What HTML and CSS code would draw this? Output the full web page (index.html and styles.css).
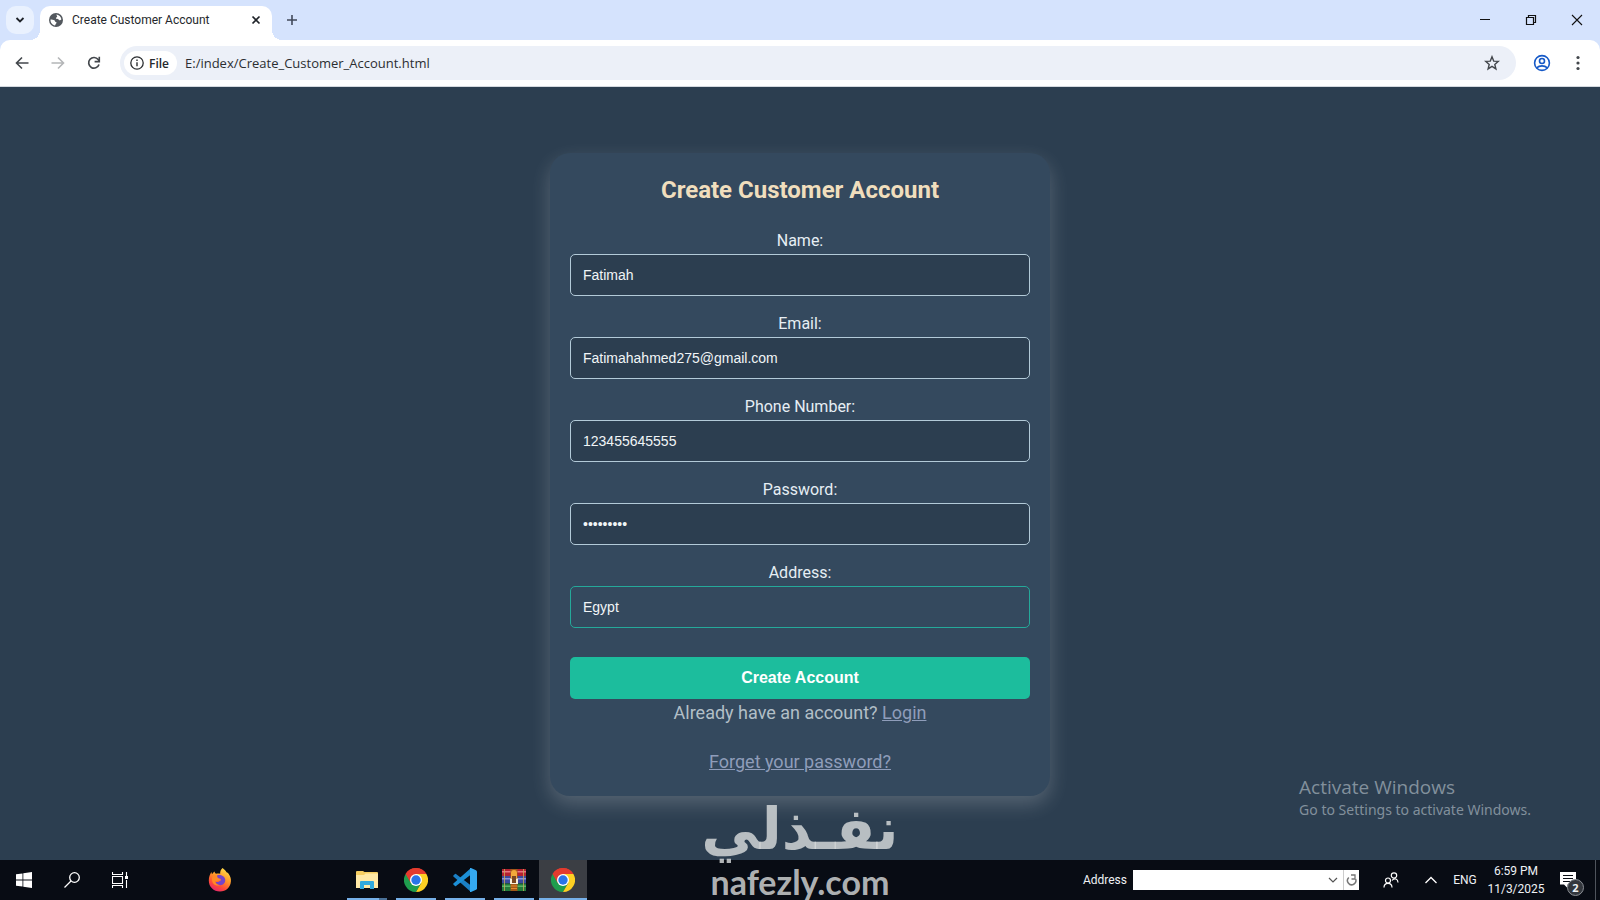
FILE: index.html
```html
<!DOCTYPE html>
<html lang="en">
<head>
<meta charset="utf-8">
<meta name="viewport" content="width=device-width, initial-scale=1">
<title>Create Customer Account</title>
<link rel="stylesheet" href="styles.css">
</head>
<body>
<svg class="defs" width="0" height="0" aria-hidden="true">
  <symbol id="chrome-logo" viewBox="0 0 24 24">
    <path d="M12 12 1.6 6A12 12 0 0 1 22.4 6z" fill="#e33b2e"/>
    <path d="M12 12 1.6 6A12 12 0 0 0 12 24l5.2-9z" fill="#1f9d4d"/>
    <path d="M12 12V6h10.4A12 12 0 0 1 12 24l5.2-9z" fill="#fdd023"/>
    <path d="M12 6H22.4A12 12 0 0 0 1.6 6l5.2 9z" fill="#e33b2e"/>
    <circle cx="12" cy="12" r="6" fill="#fff"/>
    <circle cx="12" cy="12" r="4.7" fill="#2a74e8"/>
  </symbol>
</svg>

<header class="browser">
  <div class="tabstrip">
    <button class="tab-search" aria-label="Search tabs"><svg width="10" height="10" viewBox="0 0 10 10"><path d="M1.5 3 5 6.500 8.500 3" fill="none" stroke="#1f2329" stroke-width="1.800"/></svg></button>
    <div class="tab">
      <svg width="14" height="14" viewBox="0 0 14 14"><circle cx="7" cy="7" r="7" fill="#53585e"/><path d="M7.300 1.500c2.500.1 4.800 2.200 5.100 4.800-.7 1-1.500 1.200-2.500.6-.5-1-1.600-.8-2.500-1.100-.8-.3-.4-1.300.3-1.500 1-.3.2-1.300-.4-2.800zM1.500 6.400c1.400.1 3 .2 4 .9.7 1 .3 1.400 1.300 1.700 1.100.3.9 1.200.1 1.700-.6.4-.3 1.300-.9 1.800C3.500 12 1.300 9.500 1.500 6.400z" fill="#fff"/></svg>
      <span class="tab-title">Create Customer Account</span>
      <button class="icon-button tab-close" aria-label="Close tab"><svg width="10" height="10" viewBox="0 0 10 10"><path d="M1.500 1.500l7 7M8.500 1.500l-7 7" stroke="#1f2329" stroke-width="1.700"/></svg></button>
    </div>
    <button class="icon-button new-tab" aria-label="New tab"><svg width="12" height="12" viewBox="0 0 12 12"><path d="M6 1v10M1 6h10" stroke="#41495a" stroke-width="1.600"/></svg></button>
    <div class="window-buttons">
      <button class="icon-button" aria-label="Minimize"><svg width="12" height="12" viewBox="0 0 12 12"><path d="M1 5.500h10" stroke="#111"/></svg></button>
      <button class="icon-button" aria-label="Restore"><svg width="12" height="12" viewBox="0 0 12 12"><path d="M1.500 3.500h7v7h-7zM3.500 3.500v-2h7v7h-2" fill="none" stroke="#111" stroke-width="1.200"/></svg></button>
      <button class="icon-button" aria-label="Close"><svg width="12" height="12" viewBox="0 0 12 12"><path d="M1 1l10 10M11 1 1 11" stroke="#111" stroke-width="1.100"/></svg></button>
    </div>
  </div>
  <div class="toolbar">
    <button class="icon-button" aria-label="Back"><svg width="14" height="14" viewBox="0 0 14 14"><path d="M13.500 7H1.800M7 1.500 1.500 7 7 12.500" fill="none" stroke="#43474c" stroke-width="1.600"/></svg></button>
    <button class="icon-button" aria-label="Forward" disabled><svg width="14" height="14" viewBox="0 0 14 14"><path d="M.5 7h11.700M7 1.500 12.500 7 7 12.500" fill="none" stroke="#b4b6b8" stroke-width="1.600"/></svg></button>
    <button class="icon-button" aria-label="Reload"><svg width="14" height="14" viewBox="0 0 14 14"><path d="M12 8.500A5.300 5.300 0 1 1 11.200 3.600l1 1.400" fill="none" stroke="#43474c" stroke-width="1.700"/><path d="M12.300.8v4.800H7.600" fill="none" stroke="#43474c" stroke-width="1.600"/></svg></button>
    <div class="omnibox">
      <button class="file-chip"><svg width="14" height="14" viewBox="0 0 14 14"><circle cx="7" cy="7" r="6.200" fill="none" stroke="#2b2e31" stroke-width="1.300"/><path d="M7 6.200v4M7 3.600v1.400" stroke="#2b2e31" stroke-width="1.400"/></svg>File</button>
      <input class="url" type="text" aria-label="Address bar" value="E:/index/Create_Customer_Account.html">
      <button class="icon-button" aria-label="Bookmark"><svg width="16" height="16" viewBox="0 0 16 16"><path d="M8 1.800l1.700 4.300 4.600.3-3.500 3 1.100 4.500L8 11.400l-3.900 2.500 1.100-4.500-3.500-3 4.600-.3z" fill="none" stroke="#43474c" stroke-width="1.400"/></svg></button>
    </div>
    <button class="icon-button" aria-label="Profile"><svg width="18" height="18" viewBox="0 0 18 18" fill="none" stroke="#1659c7" stroke-width="1.600"><circle cx="9" cy="9" r="7.400"/><circle cx="9" cy="7" r="2.500"/><path d="M3.600 13.800c3-2.600 7.800-2.600 10.800 0"/></svg></button>
    <button class="icon-button" aria-label="Menu"><svg width="16" height="16" viewBox="0 0 16 16" fill="#43474c"><circle cx="8" cy="2.500" r="1.600"/><circle cx="8" cy="8" r="1.600"/><circle cx="8" cy="13.500" r="1.600"/></svg></button>
  </div>
</header>

<main class="page">
  <form class="card" autocomplete="off">
    <h2 class="card-title">Create Customer Account</h2>
    <div class="field"><label for="name">Name:</label><input id="name" type="text" value="Fatimah"></div>
    <div class="field"><label for="email">Email:</label><input id="email" type="email" value="Fatimahahmed275@gmail.com"></div>
    <div class="field"><label for="phone">Phone Number:</label><input id="phone" type="tel" value="123455645555"></div>
    <div class="field"><label for="password">Password:</label><input id="password" type="password" value="fatimah27"></div>
    <div class="field"><label for="address">Address:</label><input id="address" class="active" type="text" value="Egypt"></div>
    <button class="submit" type="button">Create Account</button>
    <p class="note">Already have an account? <a href="#login">Login</a></p>
    <p class="note forgot"><a href="#forgot">Forget your password?</a></p>
  </form>
  <aside class="activate">
    <div class="activate-title">Activate Windows</div>
    <div class="activate-text">Go to Settings to activate Windows.</div>
  </aside>
</main>

<footer class="taskbar">
  <button class="task" aria-label="Start"><svg width="16" height="16" viewBox="0 0 16 16" fill="#fff"><path d="M0 2.300 6.500 1.400v6.200H0zM7.300 1.300 16 0v7.600H7.300zM0 8.400h6.500v6.200L0 13.700zM7.300 8.400H16V16l-8.700-1.300z"/></svg></button>
  <button class="task" aria-label="Search"><svg width="16" height="16" viewBox="0 0 16 16" fill="none" stroke="#fff" stroke-width="1.300"><circle cx="10.500" cy="5.500" r="4.800"/><path d="M7 9 .5 15.500"/></svg></button>
  <button class="task" aria-label="Task view"><svg width="16" height="16" viewBox="0 0 16 16" fill="none" stroke="#fff"><path d="M.5 4.500h10v7H.5zM.5 0v2.500h10V0M.5 16v-2.500h10V16M14.500 0v4M14.500 8v8" stroke-width="1.100"/><path d="M13 4h3v3h-3z" fill="#fff" stroke="none"/></svg></button>
  <button class="task firefox" aria-label="Firefox"><svg width="24" height="24" viewBox="0 0 24 24">
    <defs><linearGradient id="flame" x1=".8" y1="0" x2=".3" y2="1"><stop offset="0" stop-color="#ffe44b"/><stop offset=".45" stop-color="#ff9428"/><stop offset=".75" stop-color="#ff4a38"/><stop offset="1" stop-color="#e3266e"/></linearGradient></defs>
    <path d="M14.500 0c1.700 1.200 3.200 2.600 4 4.200 1 .2 1.900 1 2.400 2 1.500 2.200 2.300 4.600 2 7.300C22.400 19.500 18 23.500 12 23.500 5.500 23.500.8 18.800.8 12.500c0-3.500 1.200-6.500 2.600-8.500l.6 2.300C4.800 5 5.600 4.300 6.600 3.500c.1 1 .5 1.700 1.400 2.300 1.400-.4 2.700-.5 4.200 0C11.900 3.600 12.900 1.400 14.500 0z" fill="url(#flame)"/>
    <path d="M9 7.500c3-1.400 7.600.3 8.200 4 .5 3.600-2.400 5.900-5.400 5.600-2.300-.2-4-1.600-4.300-3.400 1.300.6 2.600.5 3.700-.3 1-.9 2.200-.8 1.900-1.600-.5-1-1.800-.5-3-1.400-.8-.6-.9-1.800-1.100-2.900z" fill="#7544c9"/>
    <path d="M4 10c1-2.500 3-2.800 4.500-2 .2 1.200 1.200 2.200 3 2.500l1.300.6c.1.700-1.800.9-2.900 1.700-1 .8-2.100 1-2.900.4.4 2.200 2.500 3.900 4.800 3.900-4 1.900-8.500-1.600-7.800-7.100z" fill="#ff8a26"/>
  </svg></button>
  <div class="open-apps">
    <button class="task open stacked" aria-label="File Explorer"><svg width="22" height="20" viewBox="0 0 22 20"><path d="M0 2Q0 1 1 1h6l1.500 1H21q1 0 1 1v15H0z" fill="#f6ce62"/><path d="M0 5h8l1.500-1.500H22V18H0z" fill="#ffe9a6"/><path d="M4 19v-7q0-1 1-1h12q1 0 1 1v7h-4v-4H8v4z" fill="#31a9dc"/></svg></button>
    <button class="task open" aria-label="Chrome"><svg width="24" height="24"><use href="#chrome-logo"/></svg></button>
    <button class="task open" aria-label="Visual Studio Code"><svg width="24" height="24" viewBox="0 0 24 24"><path d="M.4 7.500 2 6q.5-.4 1 0L18 17.500V24L.4 8.500q-.5-.5 0-1z" fill="#1b7fc4"/><path d="M.4 16.500 2 18q.5.4 1 0L18 6.500V0L.4 15.500q-.5.500 0 1z" fill="#1c8fd6"/><path d="M17 0h1l5 2.300q1 .5 1 1.500v16.400q0 1-1 1.500L18 24h-1z" fill="#35aaf2"/></svg></button>
    <button class="task open" aria-label="WinRAR"><svg width="24" height="24" viewBox="0 0 24 24"><path d="M0 1h24v7H0z" fill="#b3222f"/><path d="M0 8h24v7.500H0z" fill="#3c4a9d"/><path d="M0 15.500h24V23H0z" fill="#247a3a"/><path d="M0 3h24v1.500H0z" fill="#e77583"/><path d="M0 10h24v1.500H0z" fill="#8a91d8"/><path d="M0 17.500h24V19H0z" fill="#58b668"/><path d="M2.500 1v22M21.500 1v22" stroke="#c9a95a" stroke-width=".8"/><path d="M8.500 1h7v22h-7z" fill="#a35818"/><path d="M9 5q0-3 3-3t3 3v5H9z" fill="#f2a93a"/><path d="M8 10.500h8V16H8z" fill="#f7efd8"/><path d="M10 8h4v7h-4z" fill="#7b4720"/><path d="M9 18h6M9 20.500h6" stroke="#e88b2b"/></svg></button>
    <button class="task open current" aria-label="Chrome, current window"><svg width="24" height="24"><use href="#chrome-logo"/></svg></button>
  </div>
  <div class="tray">
    <label class="address-label" for="desk-address">Address</label>
    <div class="address-box">
      <input id="desk-address" type="text">
      <button class="icon-button" aria-label="Show addresses"><svg width="10" height="10" viewBox="0 0 10 10"><path d="M1 3l4 4 4-4" fill="none" stroke="#555" stroke-width="1.200"/></svg></button>
      <button class="icon-button refresh" aria-label="Refresh"><svg width="12" height="12" viewBox="0 0 12 12"><path d="M2.800 3.500A4.200 4.200 0 1 0 9.600 5" fill="none" stroke="#777" stroke-width="1.500"/><path d="M5 1h4v4M9 5H5.500" fill="none" stroke="#777" stroke-width="1.300"/></svg></button>
    </div>
    <button class="icon-button people" aria-label="People"><svg width="16" height="16" viewBox="0 0 16 16" fill="none" stroke="#fff" stroke-width="1.200"><circle cx="11" cy="3.500" r="2.700"/><circle cx="5" cy="8.500" r="2.500"/><path d="M1 15.500c0-5.500 8-5.500 8 0M9 8.500c2.500-3.200 6-1.500 6 2"/></svg></button>
    <button class="icon-button chevron" aria-label="Hidden icons"><svg width="14" height="10" viewBox="0 0 14 10"><path d="M1.500 8 7 2.500 12.500 8" fill="none" stroke="#fff" stroke-width="1.300"/></svg></button>
    <button class="language">ENG</button>
    <button class="clock"><span>6:59 PM</span><span>11/3/2025</span></button>
    <button class="icon-button notices" aria-label="Notifications"><svg width="16" height="16" viewBox="0 0 16 16"><path d="M0 0h16v12.500H7.500V16L4 12.500H0z" fill="#fff"/><path d="M3 3.500h10M3 6.500h10M3 9.500h7" stroke="#0a0e16"/></svg><span class="badge">2</span></button>
  </div>
</footer>

<div class="watermark">
  <div class="watermark-arabic" lang="ar" dir="rtl">نفـذلي</div>
  <div class="watermark-latin">nafezly.com</div>
</div>
</body>
</html>
```

FILE: styles.css
```css
* { box-sizing: border-box; }

body {
  margin: 0;
  min-height: 100vh;
  display: flex;
  flex-direction: column;
  position: relative;
  font-family: "Open Sans", "Noto Sans", sans-serif;
  background: #2c3e50;
}

button, input { font: inherit; color: inherit; margin: 0; }
button { border: 0; padding: 0; background: none; }
input { outline: 0; min-width: 0; }
svg { display: block; flex: none; }
.defs { position: absolute; }

.icon-button {
  display: flex;
  align-items: center;
  justify-content: center;
  width: 36px;
  height: 32px;
}

/* Browser window */
.browser { background: #d5e3fd; }

.tabstrip {
  display: flex;
  align-items: center;
  height: 40px;
  padding-left: 6px;
}

.tab-search {
  display: flex;
  align-items: center;
  justify-content: center;
  width: 28px;
  height: 28px;
  border-radius: 10px;
  background: #e9f1fe;
}

.tab {
  position: relative;
  display: flex;
  align-items: center;
  align-self: flex-end;
  gap: 9px;
  width: 232px;
  height: 34px;
  margin-left: 6px;
  padding: 0 6px 6px 9px;
  border-radius: 10px 10px 0 0;
  background: #fff;
  font-family: Roboto, sans-serif;
  font-size: 12px;
  color: #25282c;
}

.tab::before, .tab::after {
  content: "";
  position: absolute;
  bottom: 0;
  width: 10px;
  height: 10px;
}
.tab::before { right: 100%; background: radial-gradient(circle at 0 0, transparent 10px, #fff 10px); }
.tab::after { left: 100%; background: radial-gradient(circle at 100% 0, transparent 10px, #fff 10px); }

.tab-title { flex: 1; white-space: nowrap; }
.tab-close { width: 20px; height: 20px; }
.new-tab { margin-left: 2px; }
.window-buttons { display: flex; margin-left: auto; }
.window-buttons .icon-button { width: 46px; }

.toolbar {
  display: flex;
  align-items: center;
  height: 47px;
  padding: 0 4px;
  border-bottom: 1px solid #d4d9df;
  border-radius: 10px 10px 0 0;
  background: #fff;
}

.omnibox {
  flex: 1;
  display: flex;
  align-items: center;
  height: 34px;
  margin: 0 8px;
  padding: 0 6px 0 4px;
  border-radius: 17px;
  background: #ecf0f8;
}

.file-chip {
  display: flex;
  align-items: center;
  gap: 5px;
  height: 24px;
  padding: 0 8px 0 6px;
  border-radius: 12px;
  background: #fff;
  font-size: 12px;
  font-weight: 600;
  color: #25282c;
}

.url {
  flex: 1;
  border: 0;
  padding: 0 8px;
  background: none;
  font-size: 13px;
  color: #2b2e31;
}

/* Account page */
.page {
  flex: 1;
  position: relative;
  padding: 66px 20px 64px;
  font-family: Roboto, sans-serif;
}

.card {
  display: flex;
  flex-direction: column;
  max-width: 500px;
  margin: 0 auto;
  padding: 20px;
  border-radius: 20px;
  background: #34495e;
  box-shadow: 0 8px 20px rgba(255, 255, 255, 0.2);
  text-align: center;
}

.card-title {
  margin: 0 0 26px;
  font-size: 24px;
  line-height: 34px;
  color: #f0debd;
}

.field {
  display: flex;
  flex-direction: column;
  gap: 5px;
  margin-bottom: 20px;
  font-size: 16px;
  line-height: 16px;
  color: #e6eef4;
}

.field input {
  width: 100%;
  height: 42px;
  padding: 0 12px;
  border: 1px solid #b3cad8;
  border-radius: 5px;
  background: #2c3e50;
  font: 14px "Liberation Sans", Arial, sans-serif;
  color: #f1f5f7;
}

.field input.active { border-color: #25a99a; background: #34495e; }

.submit {
  height: 42px;
  margin-top: 9px;
  border-radius: 5px;
  background: #1cbd9d;
  font: bold 16px "Liberation Sans", Arial, sans-serif;
  color: #fff;
}

.note {
  margin: 0;
  font-size: 18px;
  line-height: 28px;
  color: #b2bfc7;
}
.note a { color: #8f9dba; }
.forgot { margin-top: 21px; }

.activate {
  position: absolute;
  right: 69px;
  bottom: 40px;
  font-family: "Open Sans", "Noto Sans", sans-serif;
  color: #82909c;
}
.activate-title { font-size: 19px; line-height: 26px; }
.activate-text { font-family: "Noto Sans", sans-serif; font-size: 14px; line-height: 20px; }

/* Taskbar */
.taskbar {
  display: flex;
  align-items: center;
  height: 40px;
  background: #080c14;
  font-size: 12px;
  color: #eef1f4;
}

.task {
  display: flex;
  align-items: center;
  justify-content: center;
  width: 48px;
  height: 40px;
}
.firefox { margin-left: 52px; }
.open-apps { display: flex; gap: 1px; margin-left: 99px; }
.open { background: linear-gradient(#76b0e8, #76b0e8) center bottom / 40px 2px no-repeat; }
.stacked { background: linear-gradient(90deg, #76b0e8 32px, #4a7198 32px) center bottom / 40px 2px no-repeat; }
.current { background: linear-gradient(#76b0e8, #76b0e8) center bottom / 100% 2px no-repeat #3b3e44; }

.tray {
  display: flex;
  align-items: center;
  height: 40px;
  margin-left: auto;
  margin-right: 4px;
  border-right: 1px solid #4f545c;
}

.address-label { font-family: Roboto, sans-serif; }
.address-box {
  display: flex;
  width: 226px;
  height: 20px;
  margin-left: 6px;
  background: #fff;
}
.address-box input { flex: 1; border: 0; padding: 0 4px; background: none; color: #111; }
.address-box .icon-button { width: 20px; height: 20px; }
.address-box .refresh { width: 16px; border-left: 1px solid #ccc; }

.people { width: 32px; margin-left: 16px; }
.chevron { width: 32px; margin-left: 8px; }
.language { width: 36px; font-family: Roboto, sans-serif; }
.clock {
  display: flex;
  flex-direction: column;
  width: 66px;
  font-family: Roboto, sans-serif;
  line-height: 18px;
  text-align: center;
}
.notices { position: relative; width: 38px; margin-right: 8px; }
.badge {
  position: absolute;
  left: 18px;
  top: 15px;
  width: 17px;
  height: 17px;
  border: 1px solid #8b8f95;
  border-radius: 50%;
  background: #33373d;
  font-size: 11px;
  font-weight: 700;
  line-height: 15px;
  text-align: center;
}

/* Site mark over the window */
.watermark {
  position: absolute;
  left: 50%;
  bottom: 0;
  transform: translateX(-50%);
  text-align: center;
  white-space: nowrap;
  color: rgba(220, 222, 222, 0.8);
  pointer-events: none;
}
.watermark-arabic { font: bold 58px/70px "DejaVu Sans", sans-serif; }
.watermark-latin { font: bold 34px/36px Lato, sans-serif; }
```
